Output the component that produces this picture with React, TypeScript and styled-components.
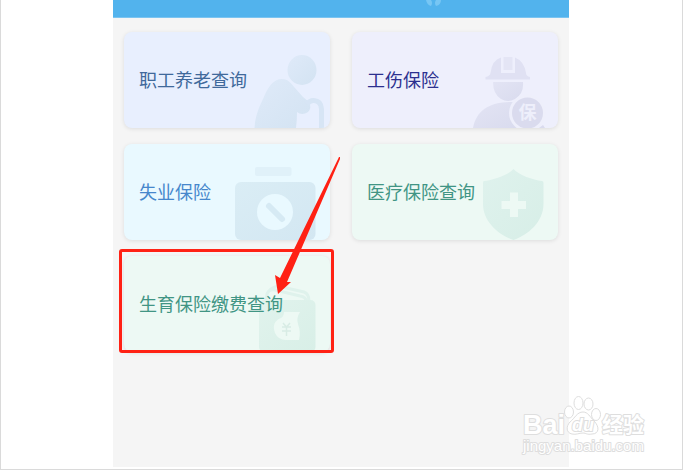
import React from "react";
import styled, { createGlobalStyle } from "styled-components";

const GlobalStyle = createGlobalStyle`
  * { box-sizing: border-box; }
  body {
    margin: 0;
    background: #fff;
    font-family: "Noto Sans CJK SC", "Noto Sans", sans-serif;
  }
`;

const Frame = styled.div`
  position: relative;
  display: flex;
  min-height: 100vh;
  padding: 0 113px 2px 112px;
  border: 1px solid #dadada;
  border-top: 0;
`;

const Screen = styled.main`
  display: flex;
  flex: 1;
  flex-direction: column;
  min-width: 0;
  background: #f5f5f5;
`;

const TopBar = styled.header`
  height: 18px;
  background: #52b3ed;
  border-bottom: 1px solid #7bc4f1;
  display: flex;
  justify-content: flex-end;
  padding-right: 126px;
`;

const CardGrid = styled.ul`
  display: grid;
  grid-template-columns: 1fr 1fr;
  gap: 16px 22px;
  margin: 0;
  padding: 14px 11px;
  list-style: none;
`;

const Cell = styled.li`
  position: relative;
  display: flex;
`;

const Card = styled.button<{ $bg: string; $ink: string }>`
  position: relative;
  display: flex;
  flex: 1;
  align-items: center;
  min-width: 0;
  height: 96px;
  padding: 0 15px 3px;
  overflow: hidden;
  border: 0;
  border-radius: 8px;
  background: ${(p) => p.$bg};
  color: ${(p) => p.$ink};
  box-shadow: 0 1px 4px rgba(0, 0, 0, 0.1);
  font-family: inherit;
  font-size: 18px;
  line-height: 24px;
  text-align: left;
  cursor: pointer;
`;

const Label = styled.span`
  position: relative;
  white-space: nowrap;
`;

const Art = styled.svg`
  position: absolute;
  right: 0;
  bottom: 0;
`;

const Highlight = styled.span`
  position: absolute;
  inset: -7px -4px -1px -5px;
  border: 3px solid #ff2114;
  border-radius: 3px;
  pointer-events: none;
`;

const Arrow = styled.svg`
  position: absolute;
  top: -100px;
  right: -10px;
  pointer-events: none;
`;

const Watermark = styled.a`
  position: absolute;
  right: 33px;
  bottom: 14px;
  display: block;
  line-height: 0;
`;

function Gradient({ id, from, to }: { id: string; from: string; to: string }) {
  return (
    <defs>
      <linearGradient id={id} x1="0" y1="0" x2="1" y2="1">
        <stop offset="0" stopColor={from} />
        <stop offset="1" stopColor={to} />
      </linearGradient>
    </defs>
  );
}

const artProps = { width: 206, height: 96, viewBox: "0 0 206 96", "aria-hidden": true };

function ElderArt() {
  return (
    <Art {...artProps}>
      <Gradient id="elder" from="#dfeaf9" to="#d3e3f2" />
      <ellipse cx="178" cy="38" rx="14.500" ry="15" fill="url(#elder)" />
      <path
        d="M130.500 96C131 86 134 77 139 67C144 55 149 47 158 47C164 47 167 51 171 56L179 65L185 70Q188 76 184 80Q178 84 173 80Q173 88 172 96Z"
        fill="url(#elder)"
      />
      <path d="M183 72Q186 68 190 68.500Q197 69 197.500 77V96" fill="none" stroke="#d7e5f5" strokeWidth="5" />
    </Art>
  );
}

function WorkerArt() {
  return (
    <Art {...artProps}>
      <Gradient id="worker" from="#e3e4f4" to="#d9dbee" />
      <path d="M133.500 47.500V45Q138 44 138.500 41Q140 28 149 25.500V41H163V25.500Q172 29 174 41Q174 44 178 45V47.500Z" fill="#e0e1f3" />
      <path d="M151.500 25H160.500V38H151.500Z" fill="#e4e5f5" />
      <path d="M141 50H171Q172 62 163 67Q156 71 149 67Q141 62 141 50Z" fill="url(#worker)" />
      <path d="M121 96C124 79 137 70 159 70H166V96Z" fill="url(#worker)" />
      <circle cx="175.500" cy="81" r="18.500" fill="#eeeffb" />
      <circle cx="175.500" cy="81" r="15.500" fill="#dadbee" />
      <path d="M187 96L191 93L193 96Z" fill="#dadbee" />
      <text
        x="175.500"
        y="87"
        textAnchor="middle"
        fontFamily="Noto Sans CJK SC, sans-serif"
        fontSize="18"
        fontWeight="700"
        fill="#eeeffb"
      >
        保
      </text>
    </Art>
  );
}

function CaseArt() {
  return (
    <Art {...artProps}>
      <Gradient id="case" from="#daedf5" to="#d3e7f2" />
      <rect x="131" y="23" width="36.500" height="9" rx="2" fill="#e0f1f9" />
      <rect x="111" y="38" width="80.500" height="58" rx="6" fill="url(#case)" />
      <circle cx="151" cy="68" r="18" fill="#e9f9ff" />
      <path d="M145 62L158 75" stroke="#d6eaf4" strokeWidth="6" strokeLinecap="round" />
    </Art>
  );
}

function ShieldArt() {
  return (
    <Art {...artProps}>
      <Gradient id="shield" from="#dff2ed" to="#d7eee7" />
      <path
        d="M161.500 25C156 31 141 36 132 37Q131 37 131 39V60C131 78 147 91 161.500 96C176 91 191.500 78 191.500 60V39Q191.500 37 190 37C181 36 167 31 161.500 25Z"
        fill="url(#shield)"
      />
      <path d="M158 48.500H166V57H174V65H166V73H158V65H149.500V57H158Z" fill="#edf9f4" />
    </Art>
  );
}

function BagArt() {
  return (
    <Art {...artProps}>
      <Gradient id="bag" from="#e1f3ed" to="#d8efe7" />
      <path
        d="M142 45L143 38Q145 33 151 34L176 40Q182 41 182 45M144 36Q150 29 158 31L180 36Q185 38 185 45"
        fill="none"
        stroke="#dff2ec"
        strokeWidth="3"
      />
      <rect x="135" y="44" width="56.500" height="52" rx="5" fill="url(#bag)" />
      <path d="M160 56H176Q172 62 174 68Q177 76 175 84H162A12 12 0 0 1 151 77Q147 66 157 62Q160 60 160 56Z" fill="#edf9f4" />
      <path d="M159 67L162.500 71L166 67M158 71H167M158 75H167M162.500 71V80" fill="none" stroke="#d8ece5" strokeWidth="1.500" />
    </Art>
  );
}

const services = [
  { name: "职工养老查询", bg: "#e8effe", ink: "#40699b", art: <ElderArt /> },
  { name: "工伤保险", bg: "#eeeffc", ink: "#2c308f", art: <WorkerArt /> },
  { name: "失业保险", bg: "#e9f9ff", ink: "#4687cc", art: <CaseArt /> },
  { name: "医疗保险查询", bg: "#edf9f4", ink: "#419584", art: <ShieldArt /> },
  { name: "生育保险缴费查询", bg: "#edf9f4", ink: "#419584", art: <BagArt />, marked: true },
];

function WatermarkArt() {
  return (
    <svg width="128" height="60" viewBox="0 0 128 60" aria-hidden="true">
      <g fill="#fff" stroke="#dedede" strokeWidth="2" strokeLinejoin="round" paintOrder="stroke">
        <text x="2" y="39" fontFamily="Liberation Sans, Arial, sans-serif" fontSize="27" fontWeight="700">
          Bai
        </text>
        <text x="81" y="37" fontFamily="Noto Sans CJK SC, sans-serif" fontSize="21" fontWeight="700">
          经验
        </text>
        <text x="2" y="56" fontFamily="Liberation Sans, Arial, sans-serif" fontSize="15">
          jingyan.baidu.com
        </text>
      </g>
      <g fill="#fff" stroke="#dedede" strokeWidth="1">
        <ellipse cx="48" cy="17" rx="4.500" ry="6" />
        <ellipse cx="57.500" cy="8" rx="4.500" ry="6.500" />
        <ellipse cx="67.500" cy="9" rx="4.500" ry="6" />
        <ellipse cx="75" cy="19.500" rx="4.500" ry="6" />
        <path d="M62 17C67 17 69 22 73 26C79 32 78 39 71 39C66 40 65 38 62 38C58 38 55 40 51 39C45 38 45 31 49 27C54 23 56 17 62 17Z" />
      </g>
      <text
        x="51"
        y="36"
        fontFamily="Liberation Sans, Arial, sans-serif"
        fontSize="18"
        fontStyle="italic"
        fontWeight="700"
        fill="#fff"
        stroke="#dedede"
        strokeWidth="2"
        paintOrder="stroke"
      >
        du
      </text>
    </svg>
  );
}

export default function App() {
  return (
    <>
      <GlobalStyle />
      <Frame>
        <Screen>
          <TopBar>
            <svg width="18" height="8" viewBox="0 0 18 8" aria-hidden="true">
              <path d="M1 0H6Q8 3 6 6Q2 5 1 0ZM11 0H16Q16 5 11 6Q9 3 11 0Z" fill="#77c6f4" />
            </svg>
          </TopBar>
          <CardGrid>
            {services.map((s) => (
              <Cell key={s.name}>
                <Card type="button" $bg={s.bg} $ink={s.ink}>
                  {s.art}
                  <Label>{s.name}</Label>
                </Card>
                {s.marked && (
                  <>
                    <Highlight />
                    <Arrow width="66" height="138" viewBox="0 0 66 138" aria-hidden="true">
                      <path d="M65 1H66V3L13 126L17 126L4 138L1 119L6 122Z" fill="#ff2114" />
                    </Arrow>
                  </>
                )}
              </Cell>
            ))}
          </CardGrid>
        </Screen>
        <Watermark href="#" aria-label="jingyan.baidu.com">
          <WatermarkArt />
        </Watermark>
      </Frame>
    </>
  );
}
